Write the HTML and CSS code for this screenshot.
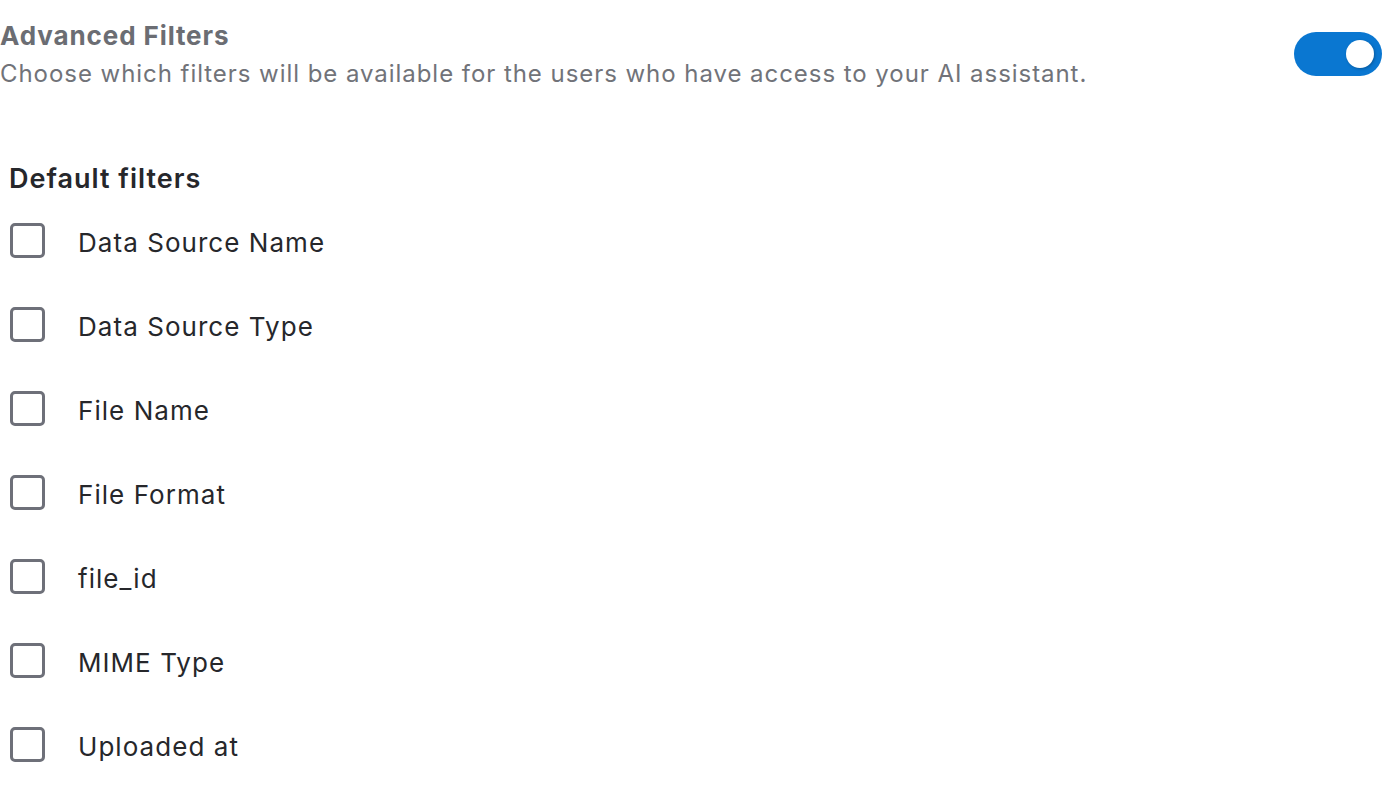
FILE: index.html
```html
<!DOCTYPE html>
<html lang="en">
<head>
<meta charset="utf-8">
<title>Advanced Filters</title>
<link rel="stylesheet" href="styles.css">
</head>
<body>
<div class="page">
  <header class="head">
    <div class="head-text">
      <h1 class="title">Advanced Filters</h1>
      <p class="subtitle">Choose which filters will be available for the users who have access to your AI assistant.</p>
    </div>
    <label class="toggle">
      <input type="checkbox" checked>
      <span class="track"><span class="knob"></span></span>
    </label>
  </header>

  <section class="filters">
    <h2 class="section-title">Default filters</h2>
    <ul class="filter-list">
      <li class="filter"><span class="box"></span><span class="label">Data Source Name</span></li>
      <li class="filter"><span class="box"></span><span class="label">Data Source Type</span></li>
      <li class="filter"><span class="box"></span><span class="label">File Name</span></li>
      <li class="filter"><span class="box"></span><span class="label">File Format</span></li>
      <li class="filter"><span class="box"></span><span class="label">file_id</span></li>
      <li class="filter"><span class="box"></span><span class="label">MIME Type</span></li>
      <li class="filter"><span class="box"></span><span class="label">Uploaded at</span></li>
    </ul>
  </section>
</div>
</body>
</html>
```

FILE: styles.css
```css
* { box-sizing: border-box; }
html, body { margin: 0; padding: 0; background: #ffffff; }
body {
  font-family: Inter, "Noto Sans", "Liberation Sans", sans-serif;
  color: #26272b;
}
.page { padding: 20px 0 0 0; }
.head {
  display: flex;
  justify-content: space-between;
  align-items: flex-start;
}
.title {
  margin: 0;
  font-size: 26px;
  line-height: 32px;
  font-weight: 700;
  letter-spacing: 0.9px;
  color: #6b6d73;
}
.subtitle {
  margin: 6px 0 0 0;
  font-size: 24px;
  line-height: 32px;
  letter-spacing: 0.95px;
  color: #717379;
}
.toggle { display: block; margin-top: 12px; cursor: pointer; }
.toggle input { display: none; }
.track {
  display: flex;
  align-items: center;
  justify-content: flex-end;
  width: 88px;
  height: 44px;
  padding: 0 8px;
  border-radius: 22px;
  background: #0a77d1;
}
.knob {
  width: 28px;
  height: 28px;
  border-radius: 50%;
  background: #ffffff;
  box-shadow: 1px 1px 3px rgba(0,0,0,0.25);
}
.filters { padding-left: 9px; margin-top: 72px; }
.section-title {
  margin: 0;
  font-size: 27px;
  line-height: 34px;
  font-weight: 600;
  letter-spacing: 1px;
  color: #26272b;
}
.filter-list { list-style: none; margin: 17px 0 0 0; padding: 0; }
.filter {
  display: flex;
  align-items: center;
  height: 84px;
  margin-top: -13px;
}
.filter + .filter { margin-top: 0; }
.box {
  width: 35px;
  height: 35px;
  margin-left: 1px;
  margin-top: -3px;
  border: 3px solid #6e7079;
  border-radius: 5px;
  flex: none;
}
.label {
  margin-left: 33px;
  font-size: 26px;
  letter-spacing: 1.05px;
  color: #26272b;
}
```
